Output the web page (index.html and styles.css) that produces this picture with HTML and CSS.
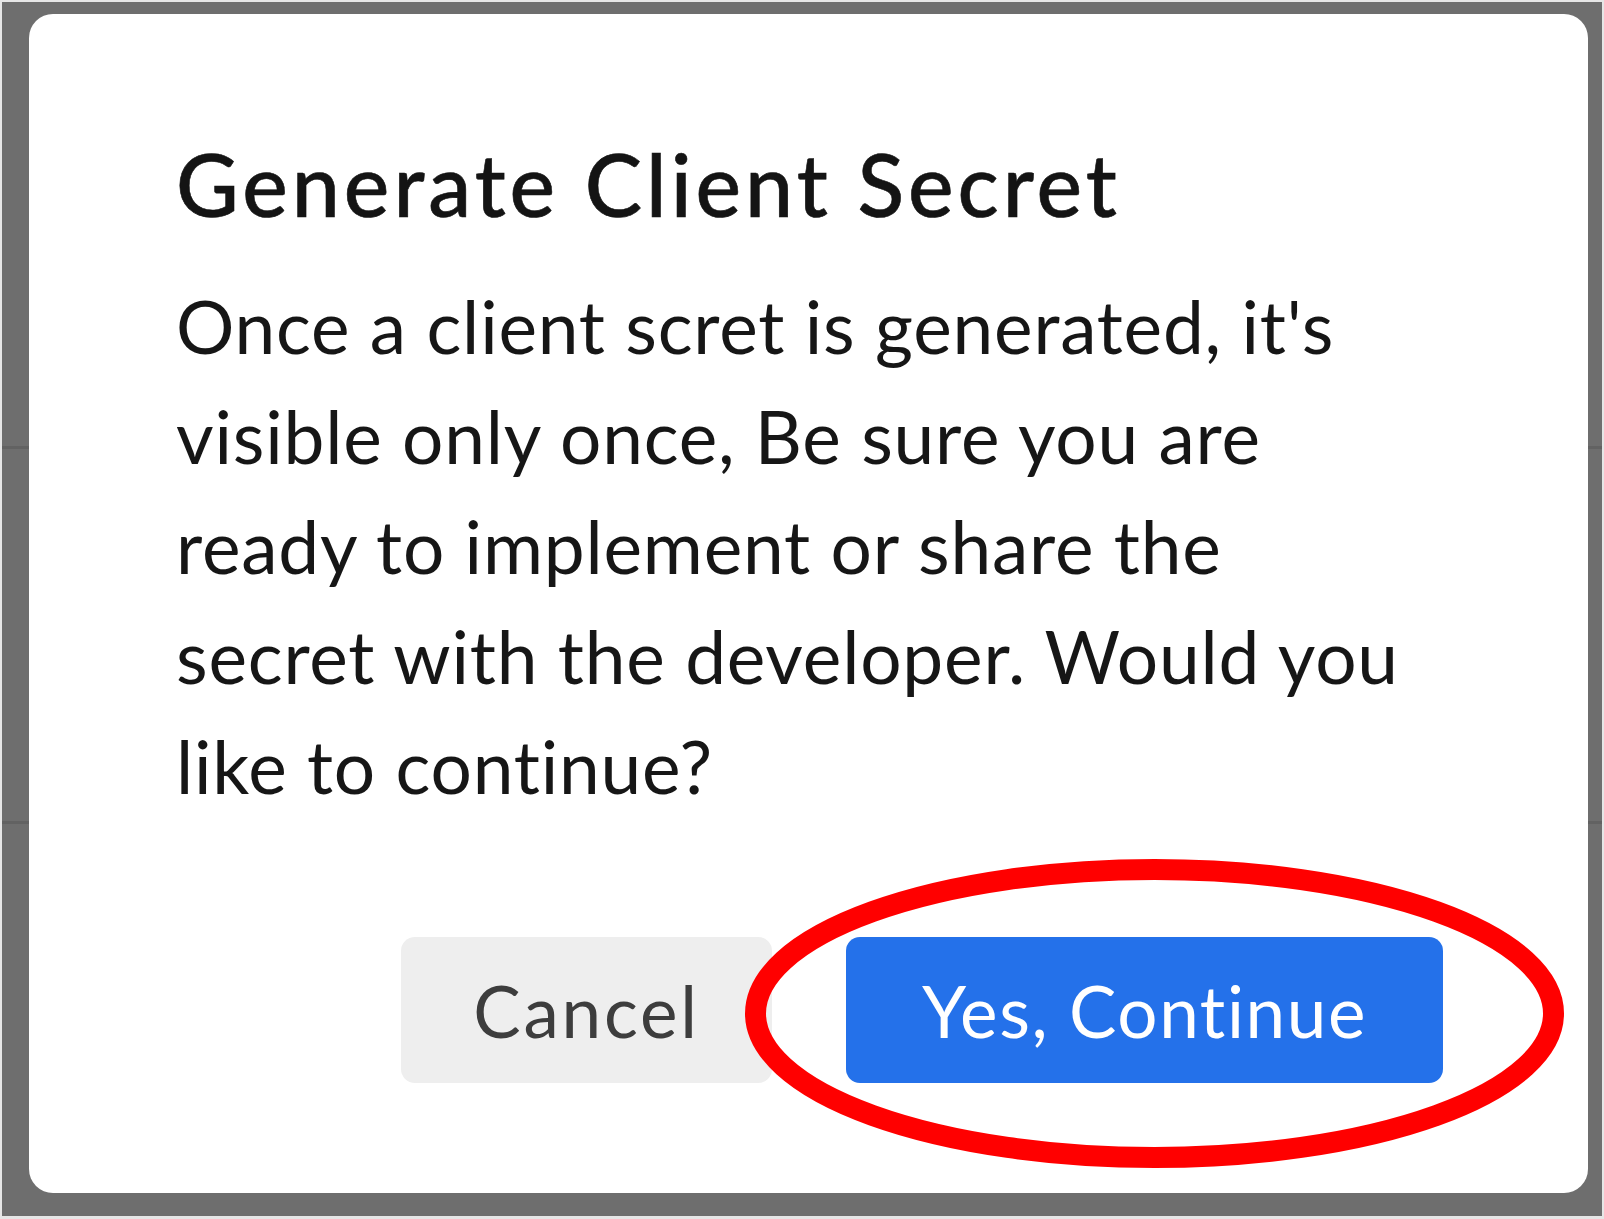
FILE: index.html
```html
<!DOCTYPE html>
<html>
    <head>
        <title>Generate Client Secret</title>
        <meta charset="UTF-8">
        <meta name="viewport" content="width=device-width, initial-scale=1.0">
        <link rel="stylesheet" href="styles.css">
    </head>
    <body>
        <div class="backdrop">
            <div class="dialog">
                <h1 class="dialog-title">Generate Client Secret</h1>
                <p class="dialog-text">Once a client scret is generated, it's visible only once, Be sure you are ready to implement or share the secret with the developer. Would you like to continue?</p>

                <div class="dialog-actions">
                    <button class="btn btn-cancel">Cancel</button>
                    <div class="highlight">
                        <button class="btn btn-confirm">Yes, Continue</button>
                        <svg class="highlight-ring" width="819" height="309" viewBox="0 0 819 309">
                            <ellipse cx="409.5" cy="154.5" rx="399" ry="144" fill="none" stroke="#ff0000" stroke-width="21"/>
                        </svg>
                    </div>
                </div>
            </div>
        </div>
    </body>
</html>
```

FILE: styles.css
```css
:root {
    --overlay: #6e6e6e;
    --text-color: #151515;
    --primary: #2471ea;
    --muted-bg: #eeeeee;
}

* {
    box-sizing: border-box;
    margin: 0;
    padding: 0;
}

body {
    font-family: 'Lato', 'Noto Sans', sans-serif;
    color: var(--text-color);
    background: #e6e6e6;
    width: 1604px;
    height: 1219px;
    overflow: hidden;
}

.backdrop {
    display: flex;
    width: 1600px;
    height: 1214px;
    margin: 2px 2px 3px 2px;
    padding: 12px 14px 23px 27px;
    background:
        linear-gradient(to bottom,
            transparent 444px, #626262 444px, #626262 447px, transparent 447px,
            transparent 819px, #626262 819px, #626262 822px, transparent 822px),
        var(--overlay);
}

.dialog {
    flex: 1;
    background: #ffffff;
    border-radius: 24px;
    padding: 118px 145px 110px 147px;
    display: flex;
    flex-direction: column;
}

.dialog-title {
    font-size: 86px;
    font-weight: 500;
    line-height: 1.2;
    color: #141414;
    letter-spacing: 4px;
    -webkit-text-stroke: 0.6px #141414;
}

.dialog-text {
    margin-top: 36px;
    font-size: 73px;
    line-height: 110px;
    color: #161616;
    letter-spacing: 0.8px;
    max-width: 1240px;
}

.dialog-actions {
    margin-top: auto;
    display: flex;
    justify-content: flex-end;
    gap: 74px;
}

.btn {
    font-family: 'Lato', 'Noto Sans', sans-serif;
    font-size: 71px;
    height: 146px;
    border: none;
    border-radius: 14px;
    cursor: pointer;
}

.btn-cancel {
    width: 371px;
    background: var(--muted-bg);
    color: #3d3d3d;
    letter-spacing: 2.8px;
}

.btn-confirm {
    width: 597px;
    background: var(--primary);
    color: #ffffff;
    letter-spacing: 1.6px;
}

.highlight {
    position: relative;
    display: flex;
}

.highlight-ring {
    position: absolute;
    left: -101px;
    top: -78px;
    pointer-events: none;
}
```
